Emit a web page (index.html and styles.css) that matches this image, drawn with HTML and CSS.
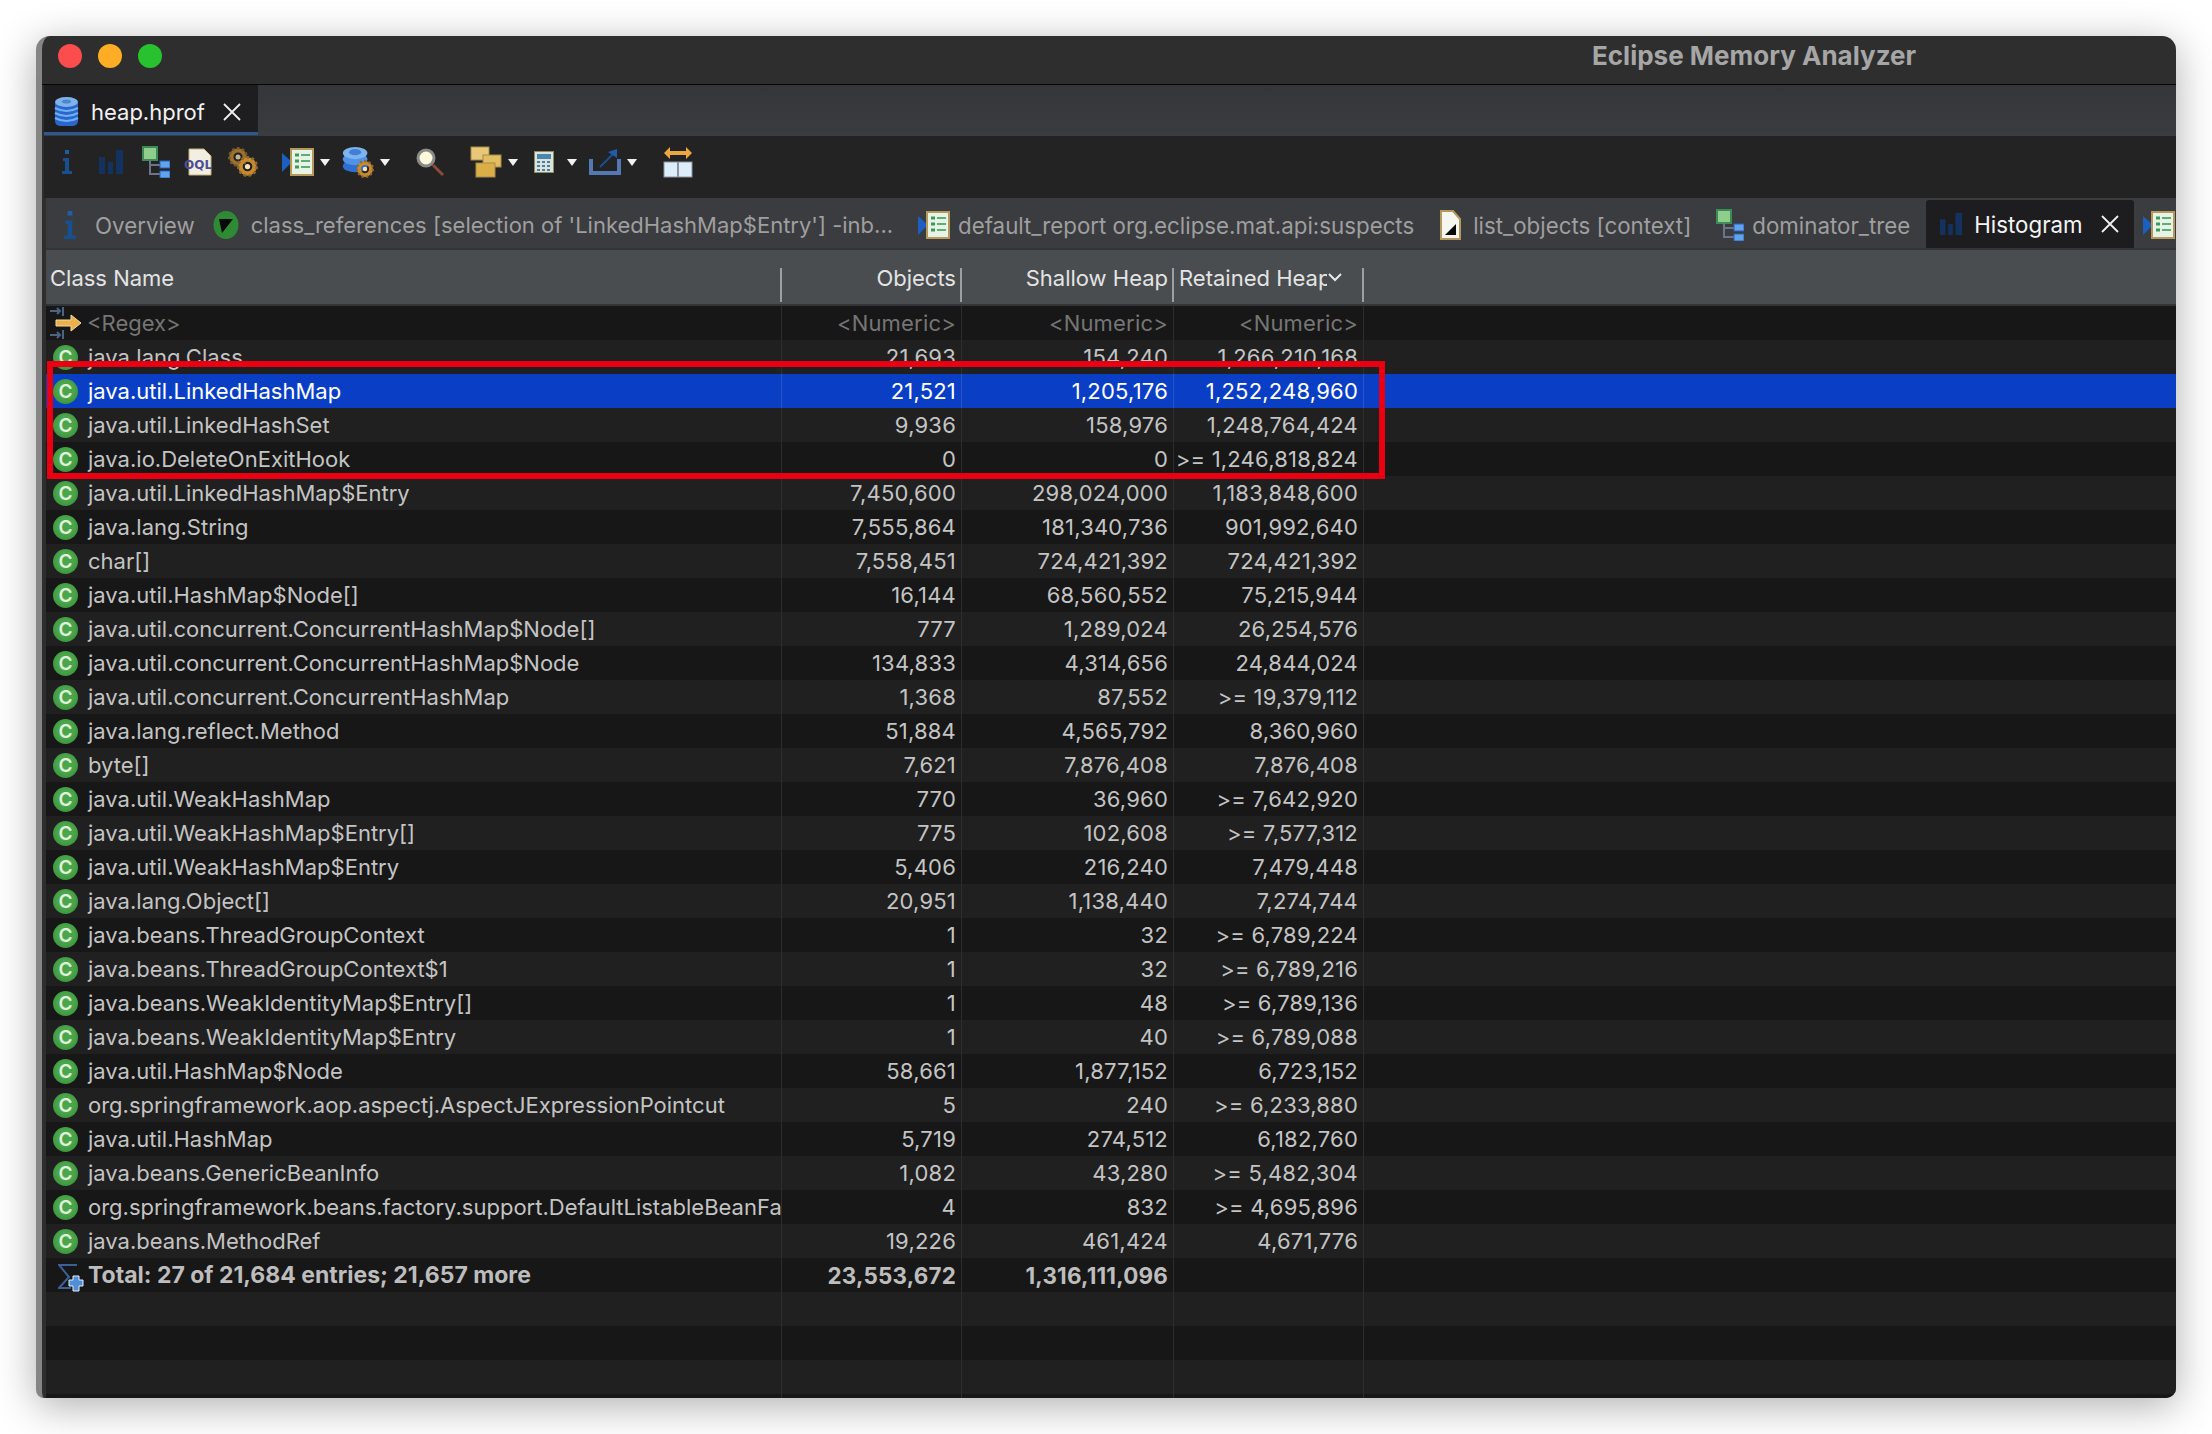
FILE: index.html
```html
<!DOCTYPE html>
<html lang="en">
<head>
    <meta charset="UTF-8">
    <title>Eclipse Memory Analyzer</title>
    <link rel="stylesheet" href="styles.css">
</head>
<body>
    <!-- shared icons -->
    <svg class="defs" width="0" height="0">
        <defs>
            <symbol id="i-info" viewBox="0 0 10 24">
                <rect x="3" y="0" width="4" height="4" fill="#1c5fa8"/>
                <path d="M1 8h6v13h3v3H0v-3h3V11H1z" fill="#174f8f"/>
            </symbol>
            <symbol id="i-bars" viewBox="0 0 24 24">
                <rect x="0" y="7" width="6" height="17" fill="#13325f"/>
                <rect x="9" y="12" width="5" height="12" fill="#13325f"/>
                <rect x="17" y="0" width="7" height="24" fill="#13325f"/>
            </symbol>
            <symbol id="i-tree" viewBox="0 0 28 32">
                <rect x="1" y="1" width="14" height="13" fill="#8fce8a" stroke="#3c8a55" stroke-width="2"/>
                <path d="M8 14v14h10M8 19h10" fill="none" stroke="#6b7488" stroke-width="2"/>
                <rect x="18" y="15" width="10" height="7" fill="#5fa4ec" stroke="#2c62b8"/>
                <rect x="18" y="25" width="10" height="7" fill="#5fa4ec" stroke="#2c62b8"/>
            </symbol>
            <symbol id="i-list" viewBox="0 0 32 28">
                <path d="M0 5l10 9-10 10z" fill="#1d5fc0"/>
                <rect x="9" y="1" width="22" height="26" fill="#e8f3e6" stroke="#b39a5c" stroke-width="2"/>
                <path d="M13 7h4M13 13h4M13 19h4" stroke="#3c9a5c" stroke-width="3"/>
                <path d="M19 7h9M19 13h9M19 19h9" stroke="#5cae78" stroke-width="2"/>
            </symbol>
            <symbol id="i-doc" viewBox="0 0 22 30">
                <path d="M2 1h12l7 8v20H2z" fill="#f6f6f0" stroke="#b39a5c" stroke-width="2"/>
                <path d="M6 25l11-11v11z" fill="#0a0a0a"/>
            </symbol>
            <symbol id="i-gear" viewBox="0 0 24 24">
                <circle cx="12" cy="12" r="8" fill="none" stroke="#c98a2e" stroke-width="5"/>
                <circle cx="12" cy="12" r="10.5" fill="none" stroke="#8f6a35" stroke-width="3" stroke-dasharray="3 3"/>
                <circle cx="12" cy="12" r="3" fill="#f4e6b8"/>
            </symbol>
            <symbol id="i-stack" viewBox="0 0 32 32">
                <ellipse cx="15" cy="23" rx="14" ry="7" fill="#2f6fd0"/>
                <ellipse cx="15" cy="15" rx="14" ry="7" fill="#4f92e6"/>
                <ellipse cx="15" cy="8" rx="14" ry="7" fill="#7db4ee"/>
                <ellipse cx="15" cy="7" rx="7" ry="3.5" fill="#3f7fd6"/>
            </symbol>
            <symbol id="i-heap" viewBox="0 0 25 32">
                <rect x="1" y="3" width="23" height="27" rx="5" fill="#2a66cc"/>
                <ellipse cx="12.500" cy="6" rx="11.500" ry="5" fill="#7fb2ea"/>
                <ellipse cx="12.500" cy="5.500" rx="4.500" ry="2" fill="#4a86d2"/>
                <path d="M1 12q11.500 6 23 0M1 17q11.500 6 23 0M1 22q11.500 6 23 0" fill="none" stroke="#6fb0f4" stroke-width="2"/>
            </symbol>
            <symbol id="i-arrow" viewBox="0 0 10 7">
                <path d="M0 0h10L5 7z" fill="#f2f2f2"/>
            </symbol>
            <symbol id="i-close" viewBox="0 0 18 18">
                <path d="M1 1l16 16M17 1L1 17" stroke="#f0f0f0" stroke-width="1.8" fill="none"/>
            </symbol>
        </defs>
    </svg>

    <div class="window">
        <div class="titlebar">
            <div class="lights">
                <span class="light red"></span>
                <span class="light orange"></span>
                <span class="light green"></span>
            </div>
            <div class="title">Eclipse Memory Analyzer</div>
        </div>

        <div class="editor-tabs">
            <div class="editor-tab">
                <svg class="heap-icon" width="25" height="32"><use href="#i-heap"/></svg>
                <span>heap.hprof</span>
                <svg class="close" width="18" height="18"><use href="#i-close"/></svg>
            </div>
        </div>

        <div class="toolbar">
            <svg class="t-info" width="10" height="24"><use href="#i-info"/></svg>
            <svg class="t-bars" width="24" height="24"><use href="#i-bars"/></svg>
            <svg class="t-tree" width="28" height="32"><use href="#i-tree"/></svg>
            <svg class="t-oql" width="29" height="28" viewBox="0 0 29 28">
                <path d="M5 1h15l7 7v19H5z" fill="#f2efe2" stroke="#c4b078"/>
                <text x="0" y="21" class="oql">OQL</text>
            </svg>
            <svg class="t-gears" width="30" height="30" viewBox="0 0 30 30">
                <use href="#i-gear" x="0" y="0" width="20" height="20" opacity=".75"/>
                <use href="#i-gear" x="9" y="9" width="21" height="21"/>
            </svg>
            <svg class="t-list" width="32" height="28"><use href="#i-list"/></svg>
            <svg class="t-arrow" width="10" height="7"><use href="#i-arrow"/></svg>
            <svg class="t-db" width="32" height="32" viewBox="0 0 32 32">
                <use href="#i-stack" width="28" height="28"/>
                <use href="#i-gear" x="14" y="14" width="18" height="18"/>
            </svg>
            <svg class="t-arrow" width="10" height="7"><use href="#i-arrow"/></svg>
            <svg class="t-find" width="28" height="28" viewBox="0 0 28 28">
                <circle cx="10" cy="10" r="8" fill="#fbf8dc" stroke="#8a8a86" stroke-width="3"/>
                <path d="M17 17l10 10" stroke="#8c4a3e" stroke-width="3"/>
            </svg>
            <svg class="t-group" width="32" height="32" viewBox="0 0 32 32">
                <rect x="1" y="1" width="18" height="13" fill="#e8c878" stroke="#a58b4c"/>
                <rect x="13" y="9" width="18" height="12" fill="#e3bd62" stroke="#a58b4c"/>
                <rect x="6" y="17" width="19" height="14" fill="#dcae48" stroke="#a58b4c"/>
            </svg>
            <svg class="t-arrow" width="10" height="7"><use href="#i-arrow"/></svg>
            <svg class="t-calc" width="20" height="22" viewBox="0 0 20 22">
                <rect x=".5" y=".5" width="19" height="21" fill="#d8e4dc" stroke="#8c8c68"/>
                <rect x="3" y="3" width="14" height="5" fill="#4c86b0"/>
                <path d="M3 11h14M3 15h14M3 19h14" stroke="#4f7fa0" stroke-width="2" stroke-dasharray="3 2"/>
            </svg>
            <svg class="t-arrow t-arrow-calc" width="10" height="7"><use href="#i-arrow"/></svg>
            <svg class="t-export" width="32" height="26" viewBox="0 0 32 26">
                <path d="M2 10v14h28V10" fill="none" stroke="#5478b4" stroke-width="4"/>
                <path d="M11 18L24 5" stroke="#1e4c96" stroke-width="2"/>
                <path d="M19 3l9-3v9z" fill="#1f5cae"/>
            </svg>
            <svg class="t-arrow" width="10" height="7"><use href="#i-arrow"/></svg>
            <svg class="t-adjust" width="30" height="32" viewBox="0 0 30 32">
                <path d="M1 7l6-6v4h16V1l6 6-6 6V9H7v4z" fill="#eca83c"/>
                <rect x="1" y="16" width="28" height="15" fill="#dceefa" stroke="#8c94a0"/>
                <path d="M15 16v15" stroke="#8c94a0" stroke-width="2"/>
            </svg>
        </div>

        <div class="query-tabs">
            <div class="query-tab tab-overview">
                <svg width="12" height="28"><use href="#i-info"/></svg>
                <span>Overview</span>
            </div>
            <div class="query-tab tab-refs">
                <svg width="26" height="28" viewBox="0 0 26 28">
                    <ellipse cx="13" cy="14" rx="12.5" ry="14" fill="#2f8a35"/>
                    <path d="M6 8h14L9 22z" fill="#0a0a0a"/>
                </svg>
                <span class="refs-label">class_references [selection of 'LinkedHashMap$Entry'] -inb...</span>
            </div>
            <div class="query-tab tab-report">
                <svg width="32" height="28"><use href="#i-list"/></svg>
                <span>default_report org.eclipse.mat.api:suspects</span>
            </div>
            <div class="query-tab tab-objects">
                <svg width="22" height="30"><use href="#i-doc"/></svg>
                <span>list_objects [context]</span>
            </div>
            <div class="query-tab tab-tree">
                <svg width="28" height="32"><use href="#i-tree"/></svg>
                <span>dominator_tree</span>
            </div>
            <div class="query-tab active">
                <svg width="22" height="26"><use href="#i-bars"/></svg>
                <span>Histogram</span>
                <svg class="close" width="18" height="18"><use href="#i-close"/></svg>
            </div>
            <div class="query-tab tab-next">
                <svg width="32" height="28"><use href="#i-list"/></svg>
            </div>
        </div>

        <div class="table">
            <div class="row header">
                <div class="cell name">Class Name</div>
                <div class="cell">Objects</div>
                <div class="cell">Shallow Heap</div>
                <div class="cell sorted">
                    <span class="sorted-label">Retained Heap</span>
                    <svg width="14" height="9" viewBox="0 0 14 9"><path d="M1 1l6 6 6-6" fill="none" stroke="#e8e8e8" stroke-width="2"/></svg>
                </div>
                <div class="cell filler"></div>
            </div>

            <div class="rows">
                <div class="row filter">
                    <div class="cell name">
                        <svg class="regex-icon" width="32" height="32" viewBox="0 0 32 32">
                            <path d="M0 4h10M7 1l3 3-3 3M13 0v9M0 28h10M7 25l3 3-3 3M13 23v9" fill="none" stroke="#4c6484" stroke-width="2"/>
                            <path d="M6 13h15V8l10 8-10 8v-5H6z" fill="#e9b04c" stroke="#f4dca0"/>
                        </svg>
                        <span>&lt;Regex&gt;</span>
                    </div>
                    <div class="cell">&lt;Numeric&gt;</div>
                    <div class="cell">&lt;Numeric&gt;</div>
                    <div class="cell">&lt;Numeric&gt;</div>
                    <div class="cell filler"></div>
                </div>
                <div class="row"><div class="cell name"><span class="cls">C</span><span>java.lang.Class</span></div><div class="cell">21,693</div><div class="cell">154,240</div><div class="cell">1,266,210,168</div><div class="cell filler"></div></div>
                <div class="row selected"><div class="cell name"><span class="cls">C</span><span>java.util.LinkedHashMap</span></div><div class="cell">21,521</div><div class="cell">1,205,176</div><div class="cell">1,252,248,960</div><div class="cell filler"></div></div>
                <div class="row"><div class="cell name"><span class="cls">C</span><span>java.util.LinkedHashSet</span></div><div class="cell">9,936</div><div class="cell">158,976</div><div class="cell">1,248,764,424</div><div class="cell filler"></div></div>
                <div class="row"><div class="cell name"><span class="cls">C</span><span>java.io.DeleteOnExitHook</span></div><div class="cell">0</div><div class="cell">0</div><div class="cell">&gt;= 1,246,818,824</div><div class="cell filler"></div></div>
                <div class="row"><div class="cell name"><span class="cls">C</span><span>java.util.LinkedHashMap$Entry</span></div><div class="cell">7,450,600</div><div class="cell">298,024,000</div><div class="cell">1,183,848,600</div><div class="cell filler"></div></div>
                <div class="row"><div class="cell name"><span class="cls">C</span><span>java.lang.String</span></div><div class="cell">7,555,864</div><div class="cell">181,340,736</div><div class="cell">901,992,640</div><div class="cell filler"></div></div>
                <div class="row"><div class="cell name"><span class="cls">C</span><span>char[]</span></div><div class="cell">7,558,451</div><div class="cell">724,421,392</div><div class="cell">724,421,392</div><div class="cell filler"></div></div>
                <div class="row"><div class="cell name"><span class="cls">C</span><span>java.util.HashMap$Node[]</span></div><div class="cell">16,144</div><div class="cell">68,560,552</div><div class="cell">75,215,944</div><div class="cell filler"></div></div>
                <div class="row"><div class="cell name"><span class="cls">C</span><span>java.util.concurrent.ConcurrentHashMap$Node[]</span></div><div class="cell">777</div><div class="cell">1,289,024</div><div class="cell">26,254,576</div><div class="cell filler"></div></div>
                <div class="row"><div class="cell name"><span class="cls">C</span><span>java.util.concurrent.ConcurrentHashMap$Node</span></div><div class="cell">134,833</div><div class="cell">4,314,656</div><div class="cell">24,844,024</div><div class="cell filler"></div></div>
                <div class="row"><div class="cell name"><span class="cls">C</span><span>java.util.concurrent.ConcurrentHashMap</span></div><div class="cell">1,368</div><div class="cell">87,552</div><div class="cell">&gt;= 19,379,112</div><div class="cell filler"></div></div>
                <div class="row"><div class="cell name"><span class="cls">C</span><span>java.lang.reflect.Method</span></div><div class="cell">51,884</div><div class="cell">4,565,792</div><div class="cell">8,360,960</div><div class="cell filler"></div></div>
                <div class="row"><div class="cell name"><span class="cls">C</span><span>byte[]</span></div><div class="cell">7,621</div><div class="cell">7,876,408</div><div class="cell">7,876,408</div><div class="cell filler"></div></div>
                <div class="row"><div class="cell name"><span class="cls">C</span><span>java.util.WeakHashMap</span></div><div class="cell">770</div><div class="cell">36,960</div><div class="cell">&gt;= 7,642,920</div><div class="cell filler"></div></div>
                <div class="row"><div class="cell name"><span class="cls">C</span><span>java.util.WeakHashMap$Entry[]</span></div><div class="cell">775</div><div class="cell">102,608</div><div class="cell">&gt;= 7,577,312</div><div class="cell filler"></div></div>
                <div class="row"><div class="cell name"><span class="cls">C</span><span>java.util.WeakHashMap$Entry</span></div><div class="cell">5,406</div><div class="cell">216,240</div><div class="cell">7,479,448</div><div class="cell filler"></div></div>
                <div class="row"><div class="cell name"><span class="cls">C</span><span>java.lang.Object[]</span></div><div class="cell">20,951</div><div class="cell">1,138,440</div><div class="cell">7,274,744</div><div class="cell filler"></div></div>
                <div class="row"><div class="cell name"><span class="cls">C</span><span>java.beans.ThreadGroupContext</span></div><div class="cell">1</div><div class="cell">32</div><div class="cell">&gt;= 6,789,224</div><div class="cell filler"></div></div>
                <div class="row"><div class="cell name"><span class="cls">C</span><span>java.beans.ThreadGroupContext$1</span></div><div class="cell">1</div><div class="cell">32</div><div class="cell">&gt;= 6,789,216</div><div class="cell filler"></div></div>
                <div class="row"><div class="cell name"><span class="cls">C</span><span>java.beans.WeakIdentityMap$Entry[]</span></div><div class="cell">1</div><div class="cell">48</div><div class="cell">&gt;= 6,789,136</div><div class="cell filler"></div></div>
                <div class="row"><div class="cell name"><span class="cls">C</span><span>java.beans.WeakIdentityMap$Entry</span></div><div class="cell">1</div><div class="cell">40</div><div class="cell">&gt;= 6,789,088</div><div class="cell filler"></div></div>
                <div class="row"><div class="cell name"><span class="cls">C</span><span>java.util.HashMap$Node</span></div><div class="cell">58,661</div><div class="cell">1,877,152</div><div class="cell">6,723,152</div><div class="cell filler"></div></div>
                <div class="row"><div class="cell name"><span class="cls">C</span><span>org.springframework.aop.aspectj.AspectJExpressionPointcut</span></div><div class="cell">5</div><div class="cell">240</div><div class="cell">&gt;= 6,233,880</div><div class="cell filler"></div></div>
                <div class="row"><div class="cell name"><span class="cls">C</span><span>java.util.HashMap</span></div><div class="cell">5,719</div><div class="cell">274,512</div><div class="cell">6,182,760</div><div class="cell filler"></div></div>
                <div class="row"><div class="cell name"><span class="cls">C</span><span>java.beans.GenericBeanInfo</span></div><div class="cell">1,082</div><div class="cell">43,280</div><div class="cell">&gt;= 5,482,304</div><div class="cell filler"></div></div>
                <div class="row"><div class="cell name"><span class="cls">C</span><span>org.springframework.beans.factory.support.DefaultListableBeanFactory</span></div><div class="cell">4</div><div class="cell">832</div><div class="cell">&gt;= 4,695,896</div><div class="cell filler"></div></div>
                <div class="row"><div class="cell name"><span class="cls">C</span><span>java.beans.MethodRef</span></div><div class="cell">19,226</div><div class="cell">461,424</div><div class="cell">4,671,776</div><div class="cell filler"></div></div>
                <div class="row total">
                    <div class="cell name">
                        <svg class="total-icon" width="26" height="28" viewBox="0 0 26 28">
                            <path d="M19 1H1l10 12L1 24h12" fill="none" stroke="#3c5f96" stroke-width="2"/>
                            <path d="M15 12h6v4h4v6h-4v5h-6v-5h-4v-6h4z" fill="#4f8fd8" stroke="#e8f0fa"/>
                        </svg>
                        <span>Total: 27 of 21,684 entries; 21,657 more</span>
                    </div>
                    <div class="cell">23,553,672</div>
                    <div class="cell">1,316,111,096</div>
                    <div class="cell"></div>
                    <div class="cell filler"></div>
                </div>
                <div class="row"><div class="cell name"></div><div class="cell"></div><div class="cell"></div><div class="cell"></div><div class="cell filler"></div></div>
                <div class="row"><div class="cell name"></div><div class="cell"></div><div class="cell"></div><div class="cell"></div><div class="cell filler"></div></div>
                <div class="row"><div class="cell name"></div><div class="cell"></div><div class="cell"></div><div class="cell"></div><div class="cell filler"></div></div>
                <div class="row"><div class="cell name"></div><div class="cell"></div><div class="cell"></div><div class="cell"></div><div class="cell filler"></div></div>
            </div>

            <div class="highlight"></div>
        </div>
    </div>
</body>
</html>
```

FILE: styles.css
```css
html, body {
    margin: 0;
    height: 100%;
    background-color: white;
}
body {
    padding: 36px 36px 0 36px;
    box-sizing: border-box;
    font-family: Inter, "Liberation Sans", sans-serif;
    font-size: 22px;
    color: #c4c4c4;
}
svg {
    display: block;
    flex: none;
}
.defs {
    position: absolute;
}
.window {
    height: 1362px;
    display: flex;
    flex-direction: column;
    overflow: hidden;
    box-sizing: border-box;
    border-left: 6px solid #858585;
    border-radius: 14px 14px 10px 8px;
    background-color: #2e2e2e;
    box-shadow: 0 8px 40px rgba(0, 0, 0, 0.32);
}

/* title bar */
.titlebar {
    flex: none;
    height: 48px;
    display: flex;
    align-items: center;
    border-bottom: 1px solid #050505;
    padding-left: 16px;
}
.lights {
    display: flex;
    gap: 16px;
    margin-top: -8px;
}
.light {
    width: 24px;
    height: 24px;
    border-radius: 50%;
}
.red { background-color: #fb4c4e; }
.orange { background-color: #ffad24; }
.green { background-color: #28c22f; }
.title {
    margin-left: 1430px;
    margin-top: -10px;
    font-size: 26px;
    font-weight: 700;
    color: #a6a6a6;
    white-space: nowrap;
}

/* editor tabs */
.editor-tabs {
    flex: none;
    height: 50px;
    display: flex;
    margin-left: 2px;
    background: linear-gradient(#35363a, #3b3c3f);
    border-bottom: 1px solid #3c3c3e;
}
.editor-tab {
    width: 214px;
    box-sizing: border-box;
    display: flex;
    align-items: center;
    padding-left: 10px;
    padding-top: 6px;
    color: #f2f2f2;
    background-color: #1e1e20;
    border-bottom: 3px solid #2a5a90;
}
.editor-tab span {
    margin-left: 12px;
}
.editor-tab .close {
    margin-left: 18px;
}

/* toolbar */
.toolbar {
    flex: none;
    height: 62px;
    box-sizing: border-box;
    padding-bottom: 10px;
    display: flex;
    align-items: center;
    margin-left: 2px;
    background-color: #232323;
}
.t-info { margin-left: 18px; }
.t-bars { margin-left: 27px; }
.t-tree { margin-left: 19px; }
.t-oql { margin-left: 14px; }
.t-gears { margin-left: 15px; }
.t-list { margin-left: 24px; }
.t-arrow { margin-left: 6px; }
.t-db { margin-left: 12px; }
.t-find { margin-left: 26px; }
.t-group { margin-left: 26px; }
.t-calc { margin-left: 16px; }
.t-arrow-calc { margin-left: 13px; }
.t-export { margin-left: 12px; }
.t-adjust { margin-left: 26px; }
.oql {
    font-family: "DejaVu Sans", sans-serif;
    font-size: 12px;
    font-weight: 700;
    fill: #4a4f96;
}

/* query tabs */
.query-tabs {
    flex: none;
    height: 46px;
    padding-top: 4px;
    display: flex;
    align-items: center;
    margin-left: 4px;
    background-color: #3b3c3f;
    border-bottom: 2px solid #333437;
    color: #9f9f9f;
    white-space: nowrap;
    overflow: hidden;
}
.query-tab {
    display: flex;
    align-items: center;
    flex: none;
    gap: 19px;
    font-size: 22.300px;
}
.tab-overview { margin-left: 18px; }
.tab-refs { margin-left: 18px; gap: 12px; font-size: 22px; }
.tab-report { margin-left: 25px; gap: 8px; }
.tab-objects { margin-left: 25px; gap: 12px; }
.tab-tree { margin-left: 25px; gap: 8px; }
.query-tab.active {
    align-self: flex-end;
    width: 208px;
    height: 48px;
    box-sizing: border-box;
    margin-left: 16px;
    padding-left: 14px;
    gap: 12px;
    color: #f4f4f4;
    background-color: #1d1d1f;
    border-radius: 3px 3px 0 0;
}
.query-tab.active .close {
    margin-left: 6px;
}
.tab-next { margin-left: 9px; }

/* table */
.table {
    flex: 1;
    min-height: 0;
    position: relative;
    margin-left: 4px;
    display: flex;
    flex-direction: column;
    overflow: hidden;
}
.row {
    height: 34px;
    flex: none;
    display: grid;
    grid-template-columns: 736px 180px 212px 190px 1fr;
    background-color: #202020;
}
.rows {
    flex: 1;
    min-height: 0;
    overflow: hidden;
}
.rows .row:nth-child(odd) {
    background-color: #171717;
}
.cell {
    display: flex;
    align-items: center;
    justify-content: flex-end;
    min-width: 0;
    box-sizing: border-box;
    padding-right: 5px;
    border-right: 1px solid #2d2d2d;
    white-space: nowrap;
    letter-spacing: 0.2px;
    overflow: hidden;
}
.cell.name {
    justify-content: flex-start;
    padding-left: 7px;
    padding-right: 0;
    letter-spacing: 0;
}
.cell.filler {
    border-right: none;
}
.name .cls {
    flex: none;
    width: 25px;
    height: 25px;
    margin-right: 10px;
    border-radius: 50%;
    display: flex;
    align-items: center;
    justify-content: center;
    font-size: 19px;
    font-weight: 600;
    color: #dff0dd;
    background: radial-gradient(circle at 50% 45%, #4ba54a 45%, #2c8a33 100%);
}

.row.header {
    height: 56px;
    padding-top: 1px;
    color: #e4e4e4;
    background-color: #494d50;
    border-bottom: 2px solid #333437;
    box-sizing: border-box;
}
.header .cell {
    border-right: none;
    position: relative;
    padding-right: 6px;
    letter-spacing: 0;
}
.header .cell:not(.filler)::after {
    content: "";
    position: absolute;
    right: 0;
    top: 17px;
    bottom: 2px;
    width: 2px;
    background-color: #9c9fa2;
}
.header .name {
    padding-left: 4px;
}
.header .sorted {
    justify-content: flex-start;
    padding-left: 5px;
}
.sorted-label {
    width: 148px;
    flex: none;
    overflow: hidden;
}
.sorted svg {
    margin-left: 1px;
}

.filter .cell {
    color: #757575;
}
.regex-icon {
    margin-left: -3px;
    margin-right: 5px;
}
.selected.row,
.rows .row.selected {
    background-color: #0a3fc5;
}
.selected .cell {
    color: white;
    border-right-color: #2a55c8;
}
.total .cell {
    font-weight: 700;
    font-size: 22.400px;
    color: #bdbdbd;
}
.total .cell.name {
    font-size: 23px;
}
.total-icon {
    margin-left: 5px;
    margin-top: 6px;
    margin-right: 4px;
}

/* red marker drawn over the screenshot */
.highlight {
    position: absolute;
    left: 1px;
    top: 111px;
    width: 1338px;
    height: 118px;
    box-sizing: border-box;
    border: 6px solid #ea0010;
}
```
